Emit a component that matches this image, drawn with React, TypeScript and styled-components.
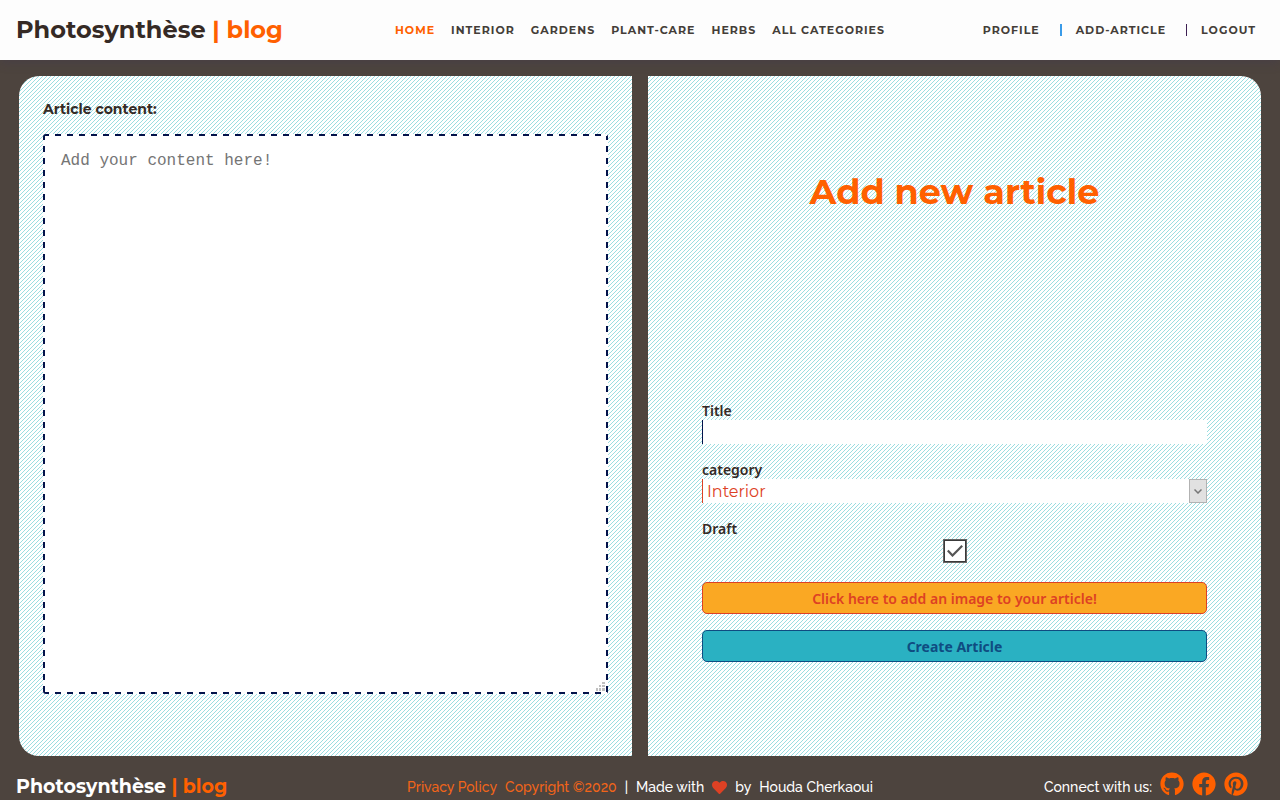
import React from "react";
import styled, { createGlobalStyle } from "styled-components";
import { FaGithub, FaFacebook, FaPinterest, FaHeart } from "react-icons/fa";

const display = `Montserrat, Inter, "Liberation Sans", sans-serif`;
const label = `"Noto Sans", "Open Sans", sans-serif`;
const footerFont = `Raleway, Lato, "Open Sans", sans-serif`;

const GlobalStyle = createGlobalStyle`
  *, *::before, *::after { box-sizing: border-box; }
  body { margin: 0; background: #4d443e; color: #352a25; font-family: ${display}; }
  a { color: inherit; text-decoration: none; }
  h1, h2, p { margin: 0; }
`;

const Page = styled.div`
  min-height: 100vh;
  display: flex;
  flex-direction: column;
`;

const Header = styled.header`
  display: grid;
  grid-template-columns: 1fr auto 1fr;
  align-items: center;
  height: 60px;
  padding: 0 16px;
  background: #fdfdfd;
  box-shadow: 0 2px 10px rgba(63, 56, 82, 0.4);
`;

const Logo = styled.a<{ $small?: boolean }>`
  font-weight: 700;
  font-size: ${(p) => (p.$small ? 19 : 24)}px;
  line-height: 28px;
  color: ${(p) => (p.$small ? "#fff" : "#352a25")};
  white-space: nowrap;
  span { color: #ff6000; }
`;

const Nav = styled.nav`
  display: flex;
  gap: 16px;
  font-size: 11px;
  line-height: 16px;
  font-weight: 700;
  letter-spacing: 1px;
  text-transform: uppercase;
  color: #443d38;
  white-space: nowrap;
`;

const AccountNav = styled(Nav)`
  justify-self: end;
  gap: 0;
  margin-right: 8px;
`;

const NavLink = styled.a<{ $active?: boolean }>`
  color: ${(p) => (p.$active ? "#ff6000" : "inherit")};
`;

const Separator = styled.span<{ $color: string; $wide?: boolean }>`
  width: ${(p) => (p.$wide ? 2 : 1)}px;
  height: 12px;
  margin: 2px 14px 0 20px;
  background: ${(p) => p.$color};
`;

const Main = styled.main`
  flex: 1;
  display: grid;
  grid-template-columns: 1fr 1fr;
  gap: 16px;
  min-height: 680px;
  margin: 16px 19px 0;
`;

/* Fixed attachment keeps the stripes continuous across both panels. */
const Panel = styled.section`
  display: flex;
  flex-direction: column;
  background-color: #fff;
  background-image: linear-gradient(
    135deg,
    #fff 44%,
    #9adee1 44%,
    #9adee1 56%,
    #fff 56%
  );
  background-size: 4px 4px;
  background-position: 3px 0;
  background-attachment: fixed;
`;

const ContentPanel = styled(Panel)`
  padding: 21px 24px 62px;
  border-radius: 20px 0 0 20px;
`;

const FormPanel = styled(Panel)`
  justify-content: space-between;
  padding: 92px 54px 94px;
  border-radius: 0 20px 20px 0;
`;

const ContentLabel = styled.label`
  font-size: 14px;
  line-height: 24px;
  font-weight: 700;
  margin-bottom: 13px;
`;

const Stack = styled.div`
  display: grid;
  > * { grid-area: 1 / 1; }
`;

const EditorStack = styled(Stack)`
  flex: 1;
`;

const Editor = styled.textarea`
  width: 100%;
  height: 100%;
  padding: 15px 16px;
  border: 2px solid transparent;
  border-radius: 3px;
  background-color: #fff;
  background-origin: border-box;
  background-image:
    linear-gradient(90deg, #03124a 6px, #fff 6px),
    linear-gradient(90deg, #03124a 6px, #fff 6px),
    linear-gradient(#03124a 6px, #fff 6px),
    linear-gradient(#03124a 6px, #fff 6px);
  background-size: 12px 2px, 12px 2px, 2px 12px, 2px 12px;
  background-position: left top, left bottom, left top, right top;
  background-repeat: repeat-x, repeat-x, repeat-y, repeat-y;
  font: 16px/20px "Courier New", "Liberation Mono", monospace;
  color: #352a25;
  resize: none;
  outline: none;
  &::placeholder { color: #757575; }
`;

const Grip = styled.svg`
  place-self: end;
  margin: 0 3px 3px 0;
  pointer-events: none;
`;

const Title = styled.h1`
  font-size: 35px;
  line-height: 48px;
  font-weight: 700;
  text-align: center;
  color: #ff6000;
`;

const Form = styled.form`
  display: flex;
  flex-direction: column;
  gap: 16px;
`;

const Field = styled.div`
  display: flex;
  flex-direction: column;
  height: 43px;
`;

const DraftField = styled(Field)`
  justify-content: space-between;
  height: 47px;
  padding-bottom: 3px;
`;

const FieldLabel = styled.label`
  font: 600 14px/19px ${label};
`;

const TextInput = styled.input`
  height: 24px;
  padding: 0 4px;
  border: 0;
  border-left: 1px solid #03124a;
  background: #fff;
  font: 16px/24px ${display};
  outline: none;
`;

const Select = styled.select`
  appearance: none;
  width: 100%;
  height: 24px;
  padding: 1px 20px 0 4px;
  border: 0;
  border-left: 1px solid #dd4124;
  border-radius: 0;
  background: #fff;
  color: #dd4124;
  font: 16px/24px ${display};
  outline: none;
`;

const SelectArrow = styled.span`
  justify-self: end;
  display: grid;
  place-items: center;
  width: 18px;
  height: 24px;
  border: 1px solid #b2b2b2;
  background: #e1e1e1;
  pointer-events: none;
`;

const CheckStack = styled(Stack)`
  align-self: center;
  place-items: center;
`;

const Checkbox = styled.input`
  appearance: none;
  width: 24px;
  height: 24px;
  margin: 0;
  border: 1px solid #666;
  background: #fff;
  box-shadow: inset 0 0 0 1px #3a3a3a;
  & + svg { visibility: hidden; pointer-events: none; }
  &:checked + svg { visibility: visible; }
`;

const Button = styled.button<{ $primary?: boolean }>`
  height: 32px;
  padding: 2px 0 0;
  border: 1px solid ${(p) => (p.$primary ? "#0f4c81" : "#dd4124")};
  border-radius: 5px;
  background: ${(p) => (p.$primary ? "#2ab1c2" : "#faa823")};
  color: ${(p) => (p.$primary ? "#0f4c81" : "#dd4124")};
  font: ${(p) => (p.$primary ? 700 : 600)} 14px/20px ${label};
`;

const Footer = styled.footer`
  display: grid;
  grid-template-columns: 1fr auto 1fr;
  align-items: center;
  height: 44px;
  padding: 17px 16px 0;
  color: #fff;
`;

const FooterText = styled.p`
  display: flex;
  align-items: center;
  gap: 8px;
  font: 500 14px/20px ${footerFont};
  font-variant-numeric: oldstyle-nums;
  white-space: nowrap;
`;

const AccentLink = styled.a`
  color: #f26419;
`;

const Social = styled(FooterText)`
  justify-self: end;
  margin-right: 16px;
  a { display: flex; margin-top: -6px; color: #ff6000; }
`;

const categories = ["Interior", "Gardens", "Plant-care", "Herbs"];

export default function App() {
  return (
    <Page>
      <GlobalStyle />
      <Header>
        <Logo href="#">
          Photosynthèse <span>| blog</span>
        </Logo>
        <Nav>
          <NavLink href="#" $active>Home</NavLink>
          {categories.map((c) => (
            <NavLink href="#" key={c}>{c}</NavLink>
          ))}
          <NavLink href="#">All categories</NavLink>
        </Nav>
        <AccountNav>
          <NavLink href="#">Profile</NavLink>
          <Separator $color="#3a9be8" $wide />
          <NavLink href="#">Add-article</NavLink>
          <Separator $color="#3d1f52" />
          <NavLink href="#">Logout</NavLink>
        </AccountNav>
      </Header>

      <Main>
        <ContentPanel>
          <ContentLabel htmlFor="content">Article content:</ContentLabel>
          <EditorStack>
            <Editor id="content" placeholder="Add your content here!" />
            <Grip width="9" height="9" fill="#c0c0c0" aria-hidden="true">
              <path d="M6 0h3v2H6zM3 3h2v2H3zM6 3h3v2H6zM0 6h2v3H0zM3 6h2v3H3zM6 6h3v3H6z" />
            </Grip>
          </EditorStack>
        </ContentPanel>

        <FormPanel>
          <Title>Add new article</Title>
          <Form onSubmit={(e) => e.preventDefault()}>
            <Field>
              <FieldLabel htmlFor="title">Title</FieldLabel>
              <TextInput id="title" type="text" />
            </Field>
            <Field>
              <FieldLabel htmlFor="category">category</FieldLabel>
              <Stack>
                <Select id="category" defaultValue="Interior">
                  {categories.map((c) => (
                    <option key={c}>{c}</option>
                  ))}
                </Select>
                <SelectArrow>
                  <svg width="8" height="5" viewBox="0 0 8 5" fill="none" stroke="#777" strokeWidth="1.5">
                    <path d="M.5.5 4 4 7.500.5" />
                  </svg>
                </SelectArrow>
              </Stack>
            </Field>
            <DraftField>
              <FieldLabel htmlFor="draft">Draft</FieldLabel>
              <CheckStack>
                <Checkbox id="draft" type="checkbox" defaultChecked />
                <svg width="16" height="12" viewBox="0 0 16 12" fill="none" stroke="#555" strokeWidth="2.2">
                  <path d="M.8 5.500 5.500 10.500 15.200.8" />
                </svg>
              </CheckStack>
            </DraftField>
            <Button type="button">Click here to add an image to your article!</Button>
            <Button type="submit" $primary>Create Article</Button>
          </Form>
        </FormPanel>
      </Main>

      <Footer>
        <Logo href="#" $small>
          Photosynthèse <span>| blog</span>
        </Logo>
        <FooterText>
          <AccentLink href="#">Privacy Policy</AccentLink>
          <AccentLink href="#">Copyright ©2020</AccentLink>
          <span>|</span>
          <span>Made with</span>
          <FaHeart size={15} color="#dd4124" />
          <span>by</span>
          <a href="#">Houda Cherkaoui</a>
        </FooterText>
        <Social as="div">
          <span>Connect with us:</span>
          <a href="#" aria-label="GitHub"><FaGithub size={24} /></a>
          <a href="#" aria-label="Facebook"><FaFacebook size={24} /></a>
          <a href="#" aria-label="Pinterest"><FaPinterest size={24} /></a>
        </Social>
      </Footer>
    </Page>
  );
}
